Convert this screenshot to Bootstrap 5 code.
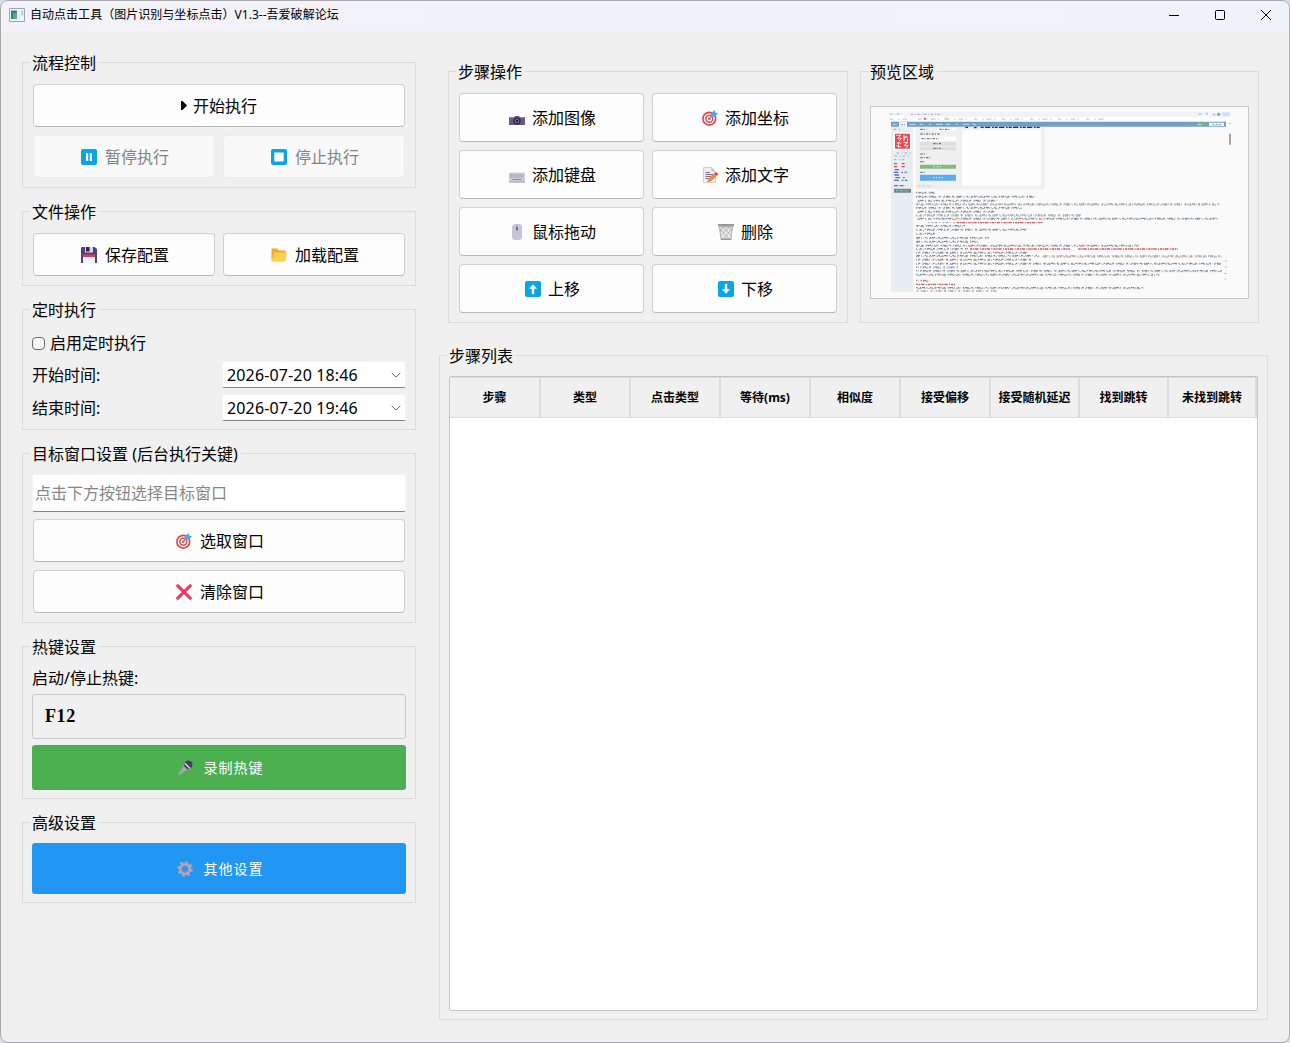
<!DOCTYPE html>
<html lang="zh-CN">
<head>
<meta charset="utf-8">
<meta name="viewport" content="width=device-width, initial-scale=1">
<title>自动点击工具</title>
<link rel="stylesheet" href="https://cdn.jsdelivr.net/npm/bootstrap@5.3.0/dist/css/bootstrap.min.css">
<style>
body{margin:0;background:#dcdfe3;font-family:"Noto Sans","Noto Sans CJK SC",sans-serif;font-size:16px;line-height:20px;color:#000;overflow:hidden}
.app-window{width:1290px;height:1043px;border:1px solid #a9a9ab;border-radius:8px;background:#f0f0f0}
.titlebar{height:30px;background:linear-gradient(90deg,#f3f2f8,#eff3f9);font-size:12px;padding:0 0 2px 8px;flex:none}
.win-btn{width:46px;height:28px}
.app-title{margin-left:5px;letter-spacing:.03px}
.side{width:394px;margin-left:21px;padding-top:31px;gap:23px;flex:none}
.main-col{width:829px;margin-left:23px;padding-top:40px}
.group{border:1px solid #dcdcdc;padding:0 10px 9px;display:flex;flex-direction:column}
.group-title{height:20px;margin:-10px 0 0 -3px;padding:0 3px 0 2px;background:#f0f0f0;align-self:flex-start;white-space:nowrap}
.group-body{padding-top:11px;display:flex;flex-direction:column;gap:8px}
.tool-btn{--bs-btn-color:#000;--bs-btn-bg:#fdfdfd;--bs-btn-border-color:#d0d0d0;--bs-btn-hover-bg:#f9f9f9;--bs-btn-disabled-color:#838383;--bs-btn-disabled-bg:#f9f9f9;--bs-btn-disabled-border-color:#ececec;--bs-btn-disabled-opacity:1;--bs-btn-border-radius:4px;--bs-btn-padding-x:0;--bs-btn-padding-y:0;--bs-btn-line-height:20px;height:43px;display:flex;align-items:center;justify-content:center;gap:8px;width:100%;border-bottom-color:#b9b9b9;white-space:nowrap;padding-left:2px}
.tool-btn:disabled{border-bottom-color:#ececec}
.tool-btn svg{flex:none;width:16px;height:16px}
.run-btn{gap:6px;padding-left:0}
.run-btn svg{width:6px;height:9px}
.ops .tool-btn{height:49px;gap:7px}
.ops-grid{display:grid;grid-template-columns:185px 185px;gap:8px;padding-top:11px}
.date-row{display:flex;align-items:center;justify-content:space-between;margin-left:-1px}
.date-box{width:184px;height:27px;background:#fff;border:1px solid #f2f2f2;border-bottom-color:#868686;border-radius:2px;padding:0 4px;margin-right:-1px;letter-spacing:.14px}
.check-sq{width:13px;height:13px;margin:0;border:1px solid #6a6a6a;border-radius:3px;background-color:#f6f6f6}
.target-input{height:38px;border:1px solid #f4f4f4;border-bottom-color:#868686;border-radius:2px;padding:0 2px;margin:0 -1px -1px;width:374px;background:#fff;font-size:16px}
.target-input::placeholder{color:#868686;opacity:1}
.hotkey-box{height:45px;border:1px solid #c8c8c8;border-radius:3px;padding-left:12px;font:bold 18px "Liberation Serif",serif;letter-spacing:.6px}
.flat-btn{--bs-btn-color:#fff;--bs-btn-border-width:0;--bs-btn-border-radius:3px;--bs-btn-padding-x:0;--bs-btn-padding-y:0;display:flex;align-items:center;justify-content:center;font-size:14px;letter-spacing:1px;gap:11px;width:100%;padding-left:2px}
.flat-btn svg{width:16px;height:16px}
.green{--bs-btn-bg:#4caf50;--bs-btn-hover-bg:#45a049;height:45px}
.blue{--bs-btn-bg:#2196f3;--bs-btn-hover-bg:#1b87dd;height:51px}
.preview-frame{height:193px;margin:24px -1px 0;border:1px solid #c9c9c9;background:#fafafa}
.list-frame{height:635px;border:1px solid #c6c6c6;border-radius:2px;background:#fff;margin:0 -1px}
.steps{table-layout:fixed;width:807px;border-collapse:separate;border-spacing:0}
.steps th{height:41px;background:#f0f0f0;border-right:2px solid #dcdcdc;border-bottom:1px solid #dcdcdc;border-top:1px solid #dcdcdc;font-size:12px;font-weight:700;text-align:center;vertical-align:middle;padding:0;white-space:nowrap}
</style>
</head>
<body>
<svg width="0" height="0" class="position-absolute" aria-hidden="true">
<symbol id="target" viewBox="0 0 16 16"><circle cx="7.3" cy="8.7" r="7.2" fill="#e0474c"/><circle cx="7.3" cy="8.7" r="5.5" fill="#fff"/><circle cx="7.3" cy="8.7" r="4.2" fill="#e0474c"/><circle cx="7.3" cy="8.7" r="2.7" fill="#fff"/><circle cx="7.3" cy="8.7" r="1.3" fill="#e0474c"/><path d="M7.3 8.7 12 4" stroke="#3b8fd0" stroke-width="1.1"/><path d="M8.8 3.6 12.5 0l.7 2.6 2.8.6-3.5 3.6-3-.4z" fill="#4ba9ec"/></symbol>
<symbol id="cross" viewBox="0 0 16 16"><path d="M1.8 1.8l12.4 12.4M14.2 1.8 1.8 14.2" stroke="#f03a5f" stroke-width="3.2" stroke-linecap="round"/></symbol>
<symbol id="chev" viewBox="0 0 10 6"><path d="M.7.8 5 5.1 9.3.8" fill="none" stroke="#666"/></symbol>
<symbol id="up" viewBox="0 0 16 16"><rect width="16" height="16" rx="2" fill="#0aa5e8"/><path d="M7 13V7.5H4.4L8 3.6l3.6 3.9H9V13z" fill="#fff" stroke="#fff" stroke-width=".4"/></symbol>
</svg>

<div class="app-window d-flex flex-column overflow-hidden">
  <header class="titlebar d-flex align-items-center">
    <svg width="16" height="14" viewBox="0 0 16 14"><path fill="#f2f4f5" stroke="#9da4aa" d="M.5.5h15v13H.5z"/><path fill="#357f91" d="M2 2.5h6v8.5H2z"/><path fill="#69a67f" d="M4 5h4v6H4z"/><path fill="#e6ebee" d="M9 2.5h2.5V11H9z"/><path fill="#c4d0d7" d="M12 2.5h2.5v5H12z"/></svg>
    <span class="app-title">自动点击工具（图片识别与坐标点击）V1.3--吾爱破解论坛</span>
    <div class="d-flex ms-auto">
      <div class="win-btn d-flex align-items-center justify-content-center"><svg width="12" height="12"><path d="M1 6.5h10" stroke="#000"/></svg></div>
      <div class="win-btn d-flex align-items-center justify-content-center"><svg width="12" height="12"><rect x="1.5" y="1.5" width="9" height="9" rx="1" fill="none" stroke="#000"/></svg></div>
      <div class="win-btn d-flex align-items-center justify-content-center"><svg width="12" height="12"><path d="M1 1l10 10M11 1 1 11" stroke="#000"/></svg></div>
    </div>
  </header>

  <main class="d-flex">
    <aside class="side d-flex flex-column">
      <section class="group">
        <div class="group-title">流程控制</div>
        <div class="group-body">
          <button class="btn tool-btn run-btn"><svg viewBox="0 0 6 9"><path d="M0 0h1.5L6 4.5 1.5 9H0z"/></svg>开始执行</button>
          <div class="d-flex gap-2">
            <button class="btn tool-btn" disabled><svg viewBox="0 0 16 16"><rect width="16" height="16" rx="2" fill="#0aa5e8"/><path fill="#fff" d="M5 4h2.2v8H5zM8.8 4H11v8H8.8z"/></svg>暂停执行</button>
            <button class="btn tool-btn" disabled><svg viewBox="0 0 16 16"><rect width="16" height="16" rx="2" fill="#0aa5e8"/><rect x="3.3" y="3.5" width="9.4" height="9" rx=".8" fill="#fff"/></svg>停止执行</button>
          </div>
        </div>
      </section>

      <section class="group">
        <div class="group-title">文件操作</div>
        <div class="group-body">
          <div class="d-flex gap-2">
            <button class="btn tool-btn"><svg viewBox="0 0 16 16"><path fill="#54407d" d="M1 0h12.5L16 2v14H0V1z"/><path fill="#d9d5e3" d="M4 0h8v5.5H4z"/><path fill="#30264b" d="M5 0h3.5v4.5H5z"/><path fill="#f3f0f6" d="M2 8h12v8H2z"/><path fill="#e23c55" d="M2 7.5h12V10H2z"/></svg>保存配置</button>
            <button class="btn tool-btn"><svg viewBox="0 0 16 16"><path fill="#f6a623" d="M.5 2.5Q.5 1.5 1.5 1.5H6l1.7 2h6q1 0 1 1V13H.5z"/><path fill="#fcd044" d="M3.7 5.5H15q1 0 .8 1l-1.4 7q-.2 1-1.2 1H1.3q-.8 0-.6-1L2.6 6.4q.2-.9 1.1-.9z"/></svg>加载配置</button>
          </div>
        </div>
      </section>

      <section class="group">
        <div class="group-title">定时执行</div>
        <div class="d-flex flex-column" style="padding-top:13px">
          <label class="d-flex align-items-center" style="height:20px;gap:5px;margin-left:-1px"><input type="checkbox" class="form-check-input check-sq">启用定时执行</label>
          <div class="date-row" style="margin-top:8px;margin-bottom:6px"><span>开始时间:</span><div class="date-box d-flex align-items-center justify-content-between"><span>2026-07-20 18:46</span><svg width="10" height="6"><use href="#chev"/></svg></div></div>
          <div class="date-row" style="margin-bottom:-1px"><span>结束时间:</span><div class="date-box d-flex align-items-center justify-content-between"><span>2026-07-20 19:46</span><svg width="10" height="6"><use href="#chev"/></svg></div></div>
        </div>
      </section>

      <section class="group">
        <div class="group-title">目标窗口设置 (后台执行关键)</div>
        <div class="group-body" style="padding-top:10px">
          <input class="target-input" placeholder="点击下方按钮选择目标窗口">
          <button class="btn tool-btn"><svg><use href="#target"/></svg>选取窗口</button>
          <button class="btn tool-btn"><svg><use href="#cross"/></svg>清除窗口</button>
        </div>
      </section>

      <section class="group" style="padding:0 9px 8px">
        <div class="group-title" style="margin-left:-2px">热键设置</div>
        <div class="d-flex flex-column" style="padding-top:11px;gap:6px">
          <span>启动/停止热键:</span>
          <div class="hotkey-box d-flex align-items-center">F12</div>
          <button class="btn flat-btn green"><svg viewBox="0 0 16 16"><path fill="#a7a4a8" d="M7 5.5 11 9.3 2 15.2.8 14z"/><circle cx="11.3" cy="4.7" r="4.2" fill="#493b67"/><path d="m7.8 3.3 5.2 5.2" stroke="#d7cfe1" stroke-width="1.6"/></svg>录制热键</button>
        </div>
      </section>

      <section class="group" style="padding:0 9px 8px">
        <div class="group-title" style="margin-left:-2px">高级设置</div>
        <div style="padding-top:10px">
          <button class="btn flat-btn blue"><svg viewBox="0 0 16 16"><circle cx="8" cy="8" r="6.6" fill="none" stroke="#a8a3bb" stroke-width="2.6" stroke-dasharray="2.9 2.28"/><circle cx="8" cy="8" r="4.4" fill="none" stroke="#aea8c0" stroke-width="3.4"/><circle cx="8" cy="8" r="3.4" fill="none" stroke="#85799f" stroke-width=".8"/></svg>其他设置</button>
        </div>
      </section>
    </aside>

    <div class="main-col">
      <div class="d-flex" style="gap:12px;padding:0 9px">
        <section class="group ops" style="width:400px">
          <div class="group-title">步骤操作</div>
          <div class="ops-grid">
            <button class="btn tool-btn"><svg viewBox="0 0 16 16"><path fill="#67598e" d="M0 7h5l1-1h4l1 1h5v8H0z"/><path fill="#8d80ad" d="M0 7h16v1.3H0z"/><circle cx="8" cy="10.9" r="3.7" fill="#30283f"/><circle cx="8" cy="10.9" r="2.2" fill="#7c7198"/><circle cx="8" cy="10.9" r="1.1" fill="#16131c"/></svg>添加图像</button>
            <button class="btn tool-btn"><svg><use href="#target"/></svg>添加坐标</button>
            <button class="btn tool-btn"><svg viewBox="0 0 16 16"><rect y="5.5" width="16" height="10" rx="1" fill="#cfcada"/><path stroke="#8f87a5" stroke-dasharray="1.3 .7" d="M1.5 8h13M1.5 10h13"/><path stroke="#8f87a5" d="M3.5 12.5h9"/><path stroke="#aaa3b8" d="M0 15h16"/></svg>添加键盘</button>
            <button class="btn tool-btn"><svg viewBox="0 0 16 16"><path fill="#f0edf4" stroke="#cbc5d5" stroke-width=".8" d="M1.5.5h8l4 4v11h-12z"/><path fill="#c7bfd3" d="M9.5.5v4h4z"/><path stroke="#77728a" d="M3.5 5.5H8M3.5 7.5h8M3.5 9.5h6M3.5 11.5h3"/><path fill="#f6893d" d="M12 6.2 15 9.1 9 14.3l-4 1.2 1.3-3.8z"/><path fill="#e43b60" d="m12 6.2 1.2-.8q1-.4 1.8.4l.8.8q.5.9-.8 2.5z"/></svg>添加文字</button>
            <button class="btn tool-btn"><svg viewBox="0 0 16 16"><rect x="3" y="0" width="10" height="16" rx="3.5" fill="#c9c4d5"/><path d="M8 0v7" stroke="#aaa3b9" stroke-width=".7"/><rect x="7" y="2.5" width="2" height="4" rx="1" fill="#77708b"/></svg>鼠标拖动</button>
            <button class="btn tool-btn"><svg viewBox="0 0 16 16"><path fill="#e6e6e6" stroke="#b0b0b0" d="M1.5 3h13l-1.5 12.5H3z"/><path stroke="#a6a6a6" stroke-width=".7" fill="none" d="m2 5 9 10M5 3l8.5 9M10 3l4 4M14 5l-9 10M11 3l-8.5 9M6 3 2 7"/><path fill="#979797" d="M0 0h16v2.5H0zM3 14.5h10V16H3z"/></svg>删除</button>
            <button class="btn tool-btn"><svg><use href="#up"/></svg>上移</button>
            <button class="btn tool-btn"><svg viewBox="0 0 16 16"><use href="#up" width="16" height="16" transform="rotate(180 8 8)"/></svg>下移</button>
          </div>
        </section>

        <section class="group" style="width:399px">
          <div class="group-title">预览区域</div>
          <div class="preview-frame">
            <svg id="preview" class="d-block" width="377" height="191" viewBox="33 172 1131 573">
              <path fill="#f2f3f9" d="M132 187h980v14H132z"/><path fill="#fff" d="M93 202h1017v14H93z"/>
              <path stroke="#9a9da6" stroke-width="2.5" stroke-dasharray="8 5 3 4" d="M90 193h35M152 194h95M1016 193h10M1038 192h6M1058 195h10"/>
              <path stroke="#a5abb4" stroke-width="2.5" stroke-dasharray="10 15 4 9 14 8 3 21" d="M90 208h640"/><path fill="#e35263" d="M192 204h6v6h-6z"/><path fill="#f5ce4b" d="M254 204h8v6h-8z"/><circle cx="1076" cy="194" r="5" fill="#74a7d1"/><rect x="1086" y="188" width="24" height="12" rx="5" fill="#d9def8"/>
              <path fill="#6e9fcb" d="M93 216h1005v15H93z"/><path fill="#fff" d="M117 218h24v13h-24zM1047 219h45v9h-45z"/><path fill="#70b57b" d="M1010 218h33v11h-33z"/>
              <path stroke="#c9ddf0" stroke-width="3" stroke-dasharray="12 17 7 14 20 10" d="M98 224h250M1013 224h25"/><path stroke="#7ba0c5" stroke-width="3" stroke-dasharray="7 3" d="M122 225h14M1057 224h27"/>
              <path fill="#e8edf1" d="M93 232h66v494H93z"/><path fill="#fff" d="M100 247h54v54h-54z"/><path fill="#df4c57" d="M105 252h45v45h-45z"/>
              <path fill="none" stroke="#fff" stroke-width="2.4" d="M109 257h14l-10 9h12l-8 8M132 256v17M129 262h15M139 258l-8 15M110 280h14M116 277v17M109 288l14 4M130 278h14l-12 10h13l-8 7M143 266v9"/>
              <path fill="#f0f0f0" d="M168 232h386v187H168z"/><path fill="#fdfdfd" d="M306 240h237v168H306zM180 261h108v12H180zM232 236h56v7h-56z"/><path fill="#dedede" d="M180 277h108v11H180zM180 291h108v11H180z"/><path fill="#80bc82" d="M180 345h108v12H180z"/><path fill="#5dadec" d="M180 375h108v18H180z"/>
              <path stroke="#333" stroke-width="4" stroke-dasharray="9 4 16 5 5 3" d="M316 233h8M342 234h8M362 233h180"/>
              <path stroke="#555" stroke-width="3" stroke-dasharray="7 3 3 4" d="M181 239h18M238 239h34M181 253h60M184 267h53M220 282h23M220 296h22M181 313h18M181 324h29M181 336h12M181 368h17"/>
              <path stroke="#d5efdc" stroke-width="4" stroke-dasharray="4 5" d="M221 351h25M219 384h30"/>
              <path stroke="#9ba2be" stroke-width="3" stroke-dasharray="7 8 3 6" d="M101 239h18M110 310h42M104 319h48M102 330h37"/>
              <path stroke="#d9485a" stroke-width="4" stroke-dasharray="9 14" d="M102 342h35M102 351h35"/><path stroke="#6663bd" stroke-width="4" stroke-dasharray="14 9 5 5" d="M104 360h13M101 368h39M103 376h15M106 384h33M102 392h40"/><path stroke="#777" stroke-width="4" stroke-dasharray="12 5" d="M102 408h35"/><path fill="#808589" d="M102 417h51v12h-51z"/><path stroke="#6bc5c5" stroke-width="3" stroke-dasharray="8 5" d="M108 423h38"/>
              <path stroke="#dcdcdc" stroke-width="8" stroke-dasharray="10 4" d="M172 409h44"/>
              <g id="paragraphs" fill="none" stroke="#72767b" stroke-width="3">
                <g stroke-dasharray="4 3 9 2 2 5 6 7 3 2 11 4 2 8 5 3 1 6">
                  <path d="M168 428h57M168 440h358M168 474h318"/><path stroke-dashoffset="31" d="M168 452h244M168 485h235M168 506h906"/><path stroke-dashoffset="9" d="M168 463h912M168 528h147M168 587h668"/><path stroke-dashoffset="57" d="M168 496h494M168 539h334M168 551h57M168 597h156"/><path stroke-dashoffset="42" d="M168 564h219M168 575h187M168 618h370M550 619h537"/><path stroke-dashoffset="18" d="M168 608h334M168 629h345M168 641h918"/><path stroke-dashoffset="69" d="M168 652h126M168 663h918M168 692h40"/><path stroke-dashoffset="26" d="M168 674h730M168 714h682M170 724h240"/>
                </g>
                <g stroke="#a0a4a9" stroke-dasharray="2 6 5 4 8 3 3 9 4 5 12 7 2 3">
                  <path d="M168 431h57M168 443h358M168 477h318"/><path stroke-dashoffset="13" d="M168 455h244M168 488h235M168 509h906"/><path stroke-dashoffset="37" d="M168 466h912M168 531h147M168 590h668"/><path stroke-dashoffset="7" d="M168 499h494M168 542h334M168 554h57M168 600h156"/><path stroke-dashoffset="51" d="M168 567h219M168 578h187M168 621h370M550 622h537"/><path stroke-dashoffset="22" d="M168 611h334M168 632h345M168 644h918"/><path stroke-dashoffset="61" d="M168 655h126M168 666h918M168 695h40"/><path stroke-dashoffset="44" d="M168 677h730M168 717h682"/>
                </g>
                <path stroke="#8d9095" stroke-dasharray="3 7 5 4 8 6" d="M205 519h80"/>
              </g>
              <g stroke="#e55357" stroke-width="4" stroke-dasharray="7 2 4 2 10 4 3 3"><path d="M290 519h260M330 598h300M655 598h298M168 704h117"/></g>
              <g stroke="#85b9ed" stroke-width="3" stroke-dasharray="3 19 4 41"><path d="M220 464h850M230 507h820M200 587h630M220 641h840M180 663h880M200 715h640M200 442h300"/></g>
              <g stroke="#efc38c" stroke-width="3" stroke-dasharray="3 44 4 33"><path d="M230 465h840M190 497h450M240 508h810M210 620h840M200 642h850M200 675h680"/></g>
              <path fill="#a6a6a6" d="M1107 252h6v33h-6z"/><path stroke="#c0c0c0" stroke-width="3" d="M1106 221h8M1094 634h7M1094 652h7M1092 671h9M1094 688h5"/>
            </svg>
          </div>
        </section>
      </div>

      <section class="group" style="margin-top:32px;padding-bottom:8px">
        <div class="group-title">步骤列表</div>
        <div style="padding-top:10px">
          <div class="list-frame">
            <table class="steps">
              <colgroup><col style="width:91px"><col style="width:90px"><col style="width:90px"><col style="width:90px"><col style="width:90px"><col style="width:90px"><col style="width:89px"><col style="width:89px"><col style="width:88px"></colgroup>
              <thead><tr><th>步骤</th><th>类型</th><th>点击类型</th><th>等待(ms)</th><th>相似度</th><th>接受偏移</th><th>接受随机延迟</th><th>找到跳转</th><th>未找到跳转</th></tr></thead>
            </table>
          </div>
        </div>
      </section>
    </div>
  </main>
</div>
<script src="https://cdn.jsdelivr.net/npm/bootstrap@5.3.0/dist/js/bootstrap.bundle.min.js"></script>
</body>
</html>
